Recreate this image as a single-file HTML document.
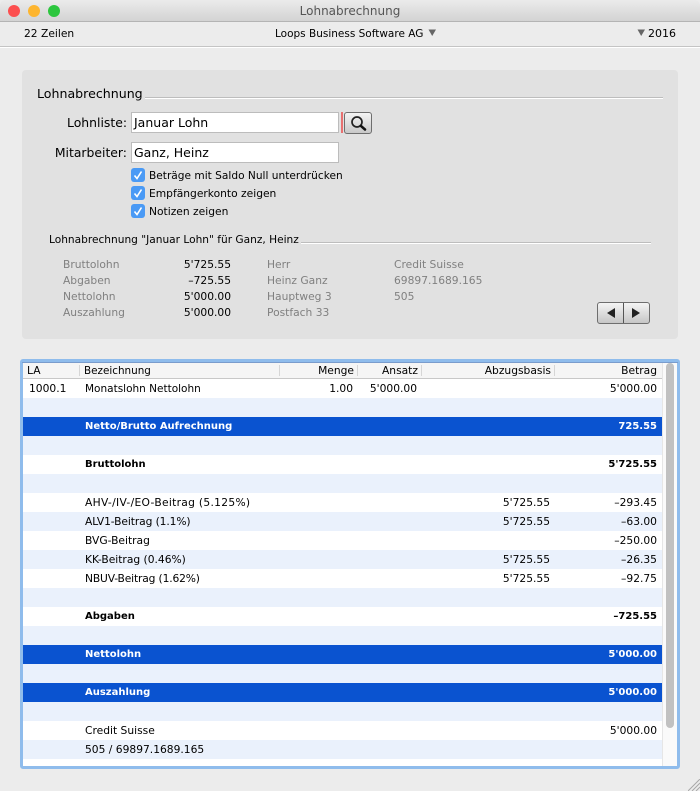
<!DOCTYPE html>
<html><head><meta charset="utf-8">
<style>
html,body{margin:0;padding:0;width:700px;height:791px;overflow:hidden;background:#ececec}
body{position:relative;font-family:"DejaVu Sans","Liberation Sans",sans-serif;font-size:10.7px;color:#000}
.a{position:absolute}
.t{position:absolute;white-space:nowrap;line-height:16px;height:16px}
.r{text-align:right}
.g{color:#808080}
.b{font-weight:bold;font-size:10px}
.w{color:#fff}
.l{position:absolute;height:1px;background:#bdbdbd;box-shadow:0 1px 0 #fff}
.f{position:absolute;background:#fff;border:1px solid #bcbcbc;box-sizing:border-box}
.c{position:absolute;left:131px;width:14px;height:14px;border-radius:3px;background:#4a9af5}
.c svg{position:absolute;left:0;top:0}
.row{position:absolute;left:23px;width:639px;height:19px}
.alt{background:#eaf1fc}
.blue{background:#0a53d0}
.hs{position:absolute;top:365px;width:1px;height:11px;background:#d6d6d6}
</style></head><body>
<div class="a" style="left:0;top:0;width:700px;height:22px;background:linear-gradient(#ebebeb,#d3d3d3);border-bottom:1px solid #b4b4b4;box-sizing:border-box;border-radius:5px 5px 0 0"></div>
<div class="a" style="left:8px;top:5px;width:12px;height:12px;border-radius:50%;background:#fc4f4f"></div>
<div class="a" style="left:28px;top:5px;width:12px;height:12px;border-radius:50%;background:#fdb52f"></div>
<div class="a" style="left:48px;top:5px;width:12px;height:12px;border-radius:50%;background:#2cc63e"></div>
<div class="t" style="left:0;width:700px;text-align:center;top:3px;font-size:12px;color:#555">Lohnabrechnung</div>
<div class="a" style="left:0;top:46px;width:700px;height:1px;background:#c4c4c4;box-shadow:0 1px 0 #fff"></div>
<div class="t" style="left:24px;top:26px">22 Zeilen</div>
<div class="t" style="left:275px;top:26px;font-size:10.5px">Loops Business Software AG</div>
<svg class="a" style="left:428px;top:29px" width="9" height="8"><path d="M0.5 0.5H8L4.2 7z" fill="#666"/></svg>
<svg class="a" style="left:637px;top:29px" width="9" height="8"><path d="M0.5 0.5H8L4.2 7z" fill="#666"/></svg>
<div class="t" style="left:648px;top:26px;font-size:11px">2016</div>

<div class="a" style="left:22px;top:70px;width:656px;height:269px;background:#e1e1e1;border-radius:4px"></div>
<div class="t" style="left:37px;top:86px;font-size:12.6px">Lohnabrechnung</div>
<div class="l" style="left:145px;top:97px;width:518px"></div>
<div class="t r" style="left:30px;width:97px;top:115px;font-size:12.4px">Lohnliste:</div>
<div class="f" style="left:131px;top:112px;width:208px;height:21px"></div>
<div class="t" style="left:134px;top:115px;font-size:12.5px">Januar Lohn</div>
<div class="a" style="left:341px;top:112px;width:2px;height:21px;background:#e87070"></div>
<div class="a" style="left:344px;top:112px;width:28px;height:22px;box-sizing:border-box;border:1px solid #6e6e6e;border-radius:3px;background:linear-gradient(#f4f4f4,#c8c8c8)"></div>
<svg class="a" style="left:344px;top:112px" width="28" height="22"><circle cx="13" cy="10" r="5" fill="none" stroke="#222" stroke-width="1.7"/><path d="M17 14L21 17.5" stroke="#111" stroke-width="2.5" stroke-linecap="round"/></svg>
<div class="t r" style="left:30px;width:97px;top:145px;font-size:12.4px">Mitarbeiter:</div>
<div class="f" style="left:131px;top:142px;width:208px;height:21px"></div>
<div class="t" style="left:134px;top:145px;font-size:12.5px">Ganz, Heinz</div>

<div class="c" style="top:168px"><svg width="14" height="14"><path d="M3.5 7.5L6 10.5L10.5 3.5" fill="none" stroke="#fff" stroke-width="1.6"/></svg></div>
<div class="t" style="left:149px;top:168px;font-size:10.6px">Beträge mit Saldo Null unterdrücken</div>
<div class="c" style="top:186px"><svg width="14" height="14"><path d="M3.5 7.5L6 10.5L10.5 3.5" fill="none" stroke="#fff" stroke-width="1.6"/></svg></div>
<div class="t" style="left:149px;top:186px">Empfängerkonto zeigen</div>
<div class="c" style="top:204px"><svg width="14" height="14"><path d="M3.5 7.5L6 10.5L10.5 3.5" fill="none" stroke="#fff" stroke-width="1.6"/></svg></div>
<div class="t" style="left:149px;top:204px">Notizen zeigen</div>

<div class="t" style="left:49px;top:232px;font-size:10.6px">Lohnabrechnung "Januar Lohn" für Ganz, Heinz</div>
<div class="l" style="left:301px;top:242px;width:350px"></div>

<div class="t g" style="left:63px;top:257px">Bruttolohn</div>
<div class="t g" style="left:63px;top:273px">Abgaben</div>
<div class="t g" style="left:63px;top:289px">Nettolohn</div>
<div class="t g" style="left:63px;top:305px">Auszahlung</div>
<div class="t r" style="left:150px;width:81px;top:257px">5'725.55</div>
<div class="t r" style="left:150px;width:81px;top:273px">–725.55</div>
<div class="t r" style="left:150px;width:81px;top:289px">5'000.00</div>
<div class="t r" style="left:150px;width:81px;top:305px">5'000.00</div>
<div class="t g" style="left:267px;top:257px">Herr</div>
<div class="t g" style="left:267px;top:273px">Heinz Ganz</div>
<div class="t g" style="left:267px;top:289px">Hauptweg 3</div>
<div class="t g" style="left:267px;top:305px">Postfach 33</div>
<div class="t g" style="left:394px;top:257px">Credit Suisse</div>
<div class="t g" style="left:394px;top:273px">69897.1689.165</div>
<div class="t g" style="left:394px;top:289px">505</div>

<div class="a" style="left:597px;top:302px;width:53px;height:22px;box-sizing:border-box;border:1px solid #6e6e6e;border-radius:3px;background:linear-gradient(#f4f4f4,#c6c6c6)"></div>
<div class="a" style="left:623px;top:303px;width:1px;height:20px;background:#555"></div>
<svg class="a" style="left:597px;top:302px" width="53" height="22"><path d="M10 11L18 6V16z" fill="#222"/><path d="M35 6L43 11L35 16z" fill="#222"/></svg>

<div class="a" style="left:20px;top:359px;width:660px;height:410px;box-sizing:border-box;border:3px solid #8fbcec;border-radius:3px;background:#fff"></div>
<div class="a" style="left:22px;top:362px;width:656px;height:1px;background:#7a9ccc"></div>
<div class="a" style="left:23px;top:363px;width:639px;height:15px;background:#f5f5f5"></div>
<div class="a" style="left:23px;top:378px;width:639px;height:1px;background:#c8c8c8"></div>
<div class="hs" style="left:79px"></div><div class="hs" style="left:279px"></div><div class="hs" style="left:357px"></div><div class="hs" style="left:421px"></div><div class="hs" style="left:554px"></div>
<div class="t" style="left:27px;top:363px">LA</div>
<div class="t" style="left:84px;top:363px;font-size:10.4px">Bezeichnung</div>
<div class="t r" style="left:280px;width:74px;top:363px">Menge</div>
<div class="t r" style="left:360px;width:58px;top:363px">Ansatz</div>
<div class="t r" style="left:425px;width:126px;top:363px">Abzugsbasis</div>
<div class="t r" style="left:560px;width:97px;top:363px">Betrag</div>

<div class="row alt" style="top:398px"></div>
<div class="row blue" style="top:417px"></div>
<div class="row alt" style="top:436px"></div>
<div class="row alt" style="top:474px"></div>
<div class="row alt" style="top:512px"></div>
<div class="row alt" style="top:550px"></div>
<div class="row alt" style="top:588px"></div>
<div class="row alt" style="top:626px"></div>
<div class="row blue" style="top:645px"></div>
<div class="row alt" style="top:664px"></div>
<div class="row blue" style="top:683px"></div>
<div class="row alt" style="top:702px"></div>
<div class="row alt" style="top:740px"></div>

<div class="t" style="left:29px;top:381px">1000.1</div>
<div class="t" style="left:85px;top:381px;font-size:10.5px">Monatslohn Nettolohn</div>
<div class="t r" style="left:280px;width:73px;top:381px">1.00</div>
<div class="t r" style="left:350px;width:67px;top:381px">5'000.00</div>
<div class="t r" style="left:560px;width:97px;top:381px">5'000.00</div>

<div class="t b w" style="left:85px;top:419px">Netto/Brutto Aufrechnung</div>
<div class="t b w r" style="left:560px;width:97px;top:419px">725.55</div>
<div class="t b" style="left:85px;top:457px">Bruttolohn</div>
<div class="t b r" style="left:560px;width:97px;top:457px">5'725.55</div>

<div class="t" style="left:85px;top:495px;letter-spacing:.3px">AHV-/IV-/EO-Beitrag (5.125%)</div>
<div class="t r" style="left:450px;width:100px;top:495px">5'725.55</div>
<div class="t r" style="left:560px;width:97px;top:495px">–293.45</div>
<div class="t" style="left:85px;top:514px;letter-spacing:-.1px">ALV1-Beitrag (1.1%)</div>
<div class="t r" style="left:450px;width:100px;top:514px">5'725.55</div>
<div class="t r" style="left:560px;width:97px;top:514px">–63.00</div>
<div class="t" style="left:85px;top:533px">BVG-Beitrag</div>
<div class="t r" style="left:560px;width:97px;top:533px">–250.00</div>
<div class="t" style="left:85px;top:552px">KK-Beitrag (0.46%)</div>
<div class="t r" style="left:450px;width:100px;top:552px">5'725.55</div>
<div class="t r" style="left:560px;width:97px;top:552px">–26.35</div>
<div class="t" style="left:85px;top:571px;letter-spacing:-.15px">NBUV-Beitrag (1.62%)</div>
<div class="t r" style="left:450px;width:100px;top:571px">5'725.55</div>
<div class="t r" style="left:560px;width:97px;top:571px">–92.75</div>

<div class="t b" style="left:85px;top:609px">Abgaben</div>
<div class="t b r" style="left:560px;width:97px;top:609px">–725.55</div>
<div class="t b w" style="left:85px;top:647px">Nettolohn</div>
<div class="t b w r" style="left:560px;width:97px;top:647px">5'000.00</div>
<div class="t b w" style="left:85px;top:685px">Auszahlung</div>
<div class="t b w r" style="left:560px;width:97px;top:685px">5'000.00</div>
<div class="t" style="left:85px;top:723px">Credit Suisse</div>
<div class="t r" style="left:560px;width:97px;top:723px">5'000.00</div>
<div class="t" style="left:85px;top:742px">505 / 69897.1689.165</div>

<div class="a" style="left:662px;top:363px;width:15px;height:403px;background:#fafafa;border-left:1px solid #e6e6e6;box-sizing:border-box"></div>
<div class="a" style="left:666px;top:363px;width:8px;height:365px;background:#c1c1c1;border-radius:4px"></div>

<svg class="a" style="left:688px;top:779px" width="12" height="12"><path d="M0 12L12 0M4 12L12 4M8 12L12 8" stroke="#a8a8a8" stroke-width="1"/></svg>
</body></html>
